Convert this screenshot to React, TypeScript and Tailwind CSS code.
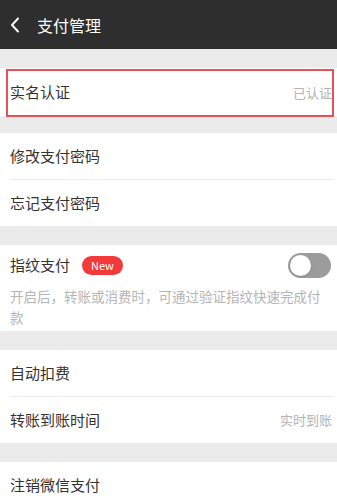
import type { ReactNode } from "react";

const font = { fontFamily: '"Noto Sans CJK SC", "Noto Sans", sans-serif' };

function Gap({ h }: { h: string }) {
    return <div className={`${h} bg-[#ebebeb]`} />;
}

function Row({ label, value, divider, tall }: { label: string; value?: string; divider?: boolean; tall?: boolean }) {
    return (
        <div className={`relative ${tall ? "h-[49px]" : "h-[46.5px]"} flex items-center justify-between pl-[10px] pr-[5px]`}>
            <span className="text-[15px] text-[#333333]">{label}</span>
            {value && <span className="text-[13px] text-[#b3b3b3]">{value}</span>}
            {divider && <div className="absolute left-[10px] right-[3px] bottom-0 h-px bg-[#ececec]" />}
        </div>
    );
}

function Section({ children }: { children: ReactNode }) {
    return <div className="bg-white">{children}</div>;
}

export default function App() {
    return (
        <div className="w-[337px] h-[501px] overflow-hidden bg-[#ebebeb]" style={font}>
            {/* 顶部导航 */}
            <div className="h-[49px] bg-[#2e2e2e] flex items-center pl-[10px] gap-[17px]">
                <svg width="10" height="16" viewBox="0 0 10 16" fill="none">
                    <path d="M8 1.5 L2 8 L8 14.5" stroke="#ffffff" strokeWidth="1.9" strokeLinecap="round" strokeLinejoin="round" />
                </svg>
                <span className="text-[16px] text-white">支付管理</span>
            </div>

            <Gap h="h-[19px]" />
            <Section>
                <div className="relative">
                    <Row label="实名认证" value="已认证" tall />
                    <div className="absolute left-[6px] right-[3px] top-px bottom-0 border-2 border-[#e8505a]" />
                </div>
            </Section>

            <Gap h="h-[16px]" />
            <Section>
                <Row label="修改支付密码" divider />
                <Row label="忘记支付密码" />
            </Section>

            <Gap h="h-[19px]" />
            <Section>
                <div className="h-[40px] flex items-center justify-between pl-[10px] pr-[6px]">
                    <div className="flex items-center gap-[12px]">
                        <span className="text-[15px] text-[#333333]">指纹支付</span>
                        <span className="h-[19px] px-[9px] rounded-full bg-[#f23a3a] text-white text-[11px] font-normal leading-[19px]">New</span>
                    </div>
                    <div className="w-[43px] h-[25px] rounded-full bg-[#9c9c9c] p-[2px] flex items-center">
                        <div className="w-[21px] h-[21px] rounded-full bg-white shadow" />
                    </div>
                </div>
                <p className="mt-px pl-[10px] pr-[4px] pb-[3px] text-[13.5px] leading-[21px] text-[#b5b5b5]">
                    开启后，转账或消费时，可通过验证指纹快速完成付款
                </p>
            </Section>

            <Gap h="h-[19px]" />
            <Section>
                <Row label="自动扣费" divider />
                <Row label="转账到账时间" value="实时到账" />
            </Section>

            <Gap h="h-[19px]" />
            <Section>
                <Row label="注销微信支付" />
                <div className="h-[20px]" />
            </Section>
        </div>
    );
}
